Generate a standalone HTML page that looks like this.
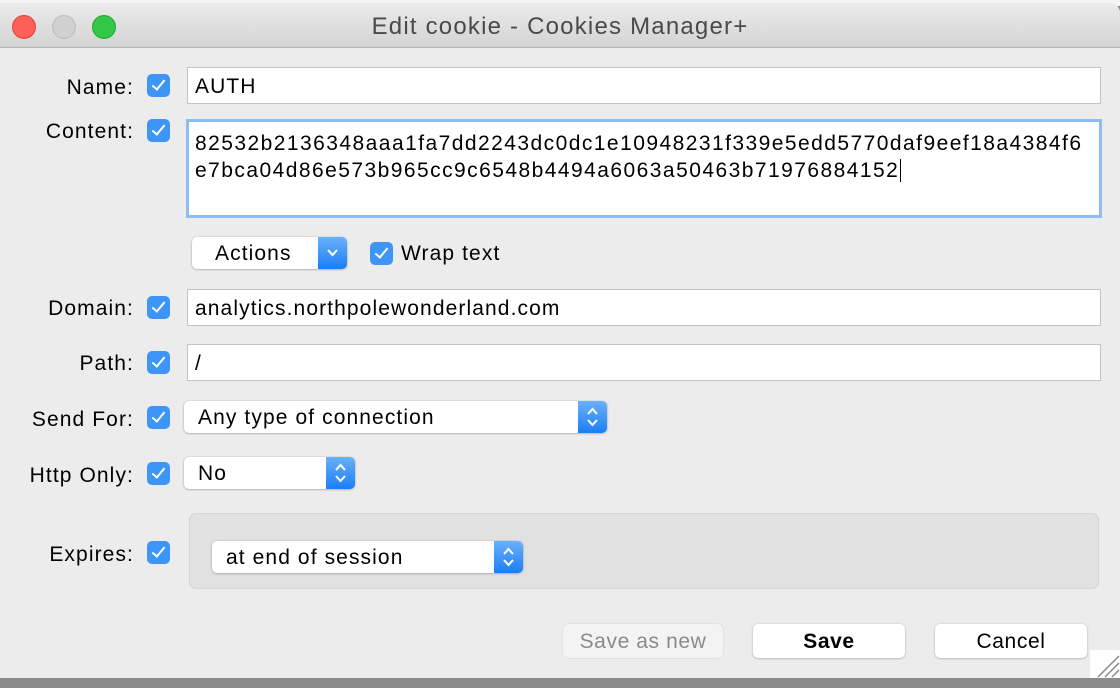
<!DOCTYPE html>
<html><head><meta charset="utf-8"><style>
*{box-sizing:border-box;margin:0;padding:0}
body{width:1120px;height:688px;overflow:hidden;background:#8a8a8a;font-family:"Liberation Sans",sans-serif;position:relative;letter-spacing:1.1px}
.top{position:absolute;left:0;top:0;width:1120px;height:6px;background:#f4f4f4}
.win{position:absolute;left:0;top:3px;width:1120px;height:675px;background:#ececec;border-radius:0 10px 0 0;overflow:hidden}
.tb{height:45px;background:linear-gradient(#ebebeb,#d4d4d4);border-bottom:1px solid #b4b4b4;text-align:center;font-size:24px;letter-spacing:1.2px;color:#4a4a4a;line-height:48px}
.light{position:absolute;top:12px;width:24px;height:24px;border-radius:50%}
.a{position:absolute}
.lbl{position:absolute;font-size:21px;color:#000;text-align:right;width:134px;left:0}
.cb{position:absolute;width:23px;height:23px;border-radius:5px;background:#3d95f8;}
.cb:after{content:"";position:absolute;left:8px;top:3px;width:5px;height:11px;border:solid #fff;border-width:0 2.5px 2.5px 0;transform:rotate(40deg)}
.inp{position:absolute;background:#fff;border:1px solid #c3c3c3;font-size:21px;padding-left:7px;color:#000}
.sel{position:absolute;background:#fff;border-radius:5px;box-shadow:0 0.5px 2px rgba(0,0,0,.35);font-size:21px;color:#000}
.arr{position:absolute;right:0;top:0;bottom:0;width:29px;background:linear-gradient(#6bb0fb,#1a7ef6);border-radius:0 5px 5px 0;color:#fff}
.btn{position:absolute;top:624px;height:34px;background:#fff;border-radius:5px;box-shadow:0 0.5px 2px rgba(0,0,0,.3);font-size:21px;letter-spacing:0.6px;text-align:center;line-height:35px}
</style></head><body>
<div class="top"></div>
<div class="win">
<div class="tb">Edit cookie - Cookies Manager+</div>
<div class="light" style="left:12px;background:#fc5f57;border:1px solid #e0443e"></div>
<div class="light" style="left:52px;background:#d0d0d0;border:1px solid #bcbcbc"></div>
<div class="light" style="left:92px;background:#33c748;border:1px solid #1dab31"></div>
</div>
<div class="lbl" style="top:76px">Name:</div><div class="cb" style="left:147px;top:74px"></div>
<div class="inp" style="left:187px;top:67px;width:914px;height:37px;line-height:38px">AUTH</div>
<div class="lbl" style="top:120px">Content:</div><div class="cb" style="left:147px;top:119px"></div>
<div class="inp" style="left:186px;top:119px;width:916px;height:99px;border:3px solid #8fbcf5;padding:8px 0 0 6px;line-height:27px;letter-spacing:1.45px;white-space:nowrap">82532b2136348aaa1fa7dd2243dc0dc1e10948231f339e5edd5770daf9eef18a4384f6<br>e7bca04d86e573b965cc9c6548b4494a6063a50463b71976884152<span style="border-left:1.5px solid #000;margin-left:1px"></span></div>
<div class="sel" style="left:192px;top:237px;width:155px;height:32px;line-height:34px;padding-left:23px">Actions<div class="arr"><svg width="29" height="32"><path d="M10 13l4.5 5 4.5-5" stroke="#fff" stroke-width="2" fill="none"/></svg></div></div>
<div class="cb" style="left:370px;top:242px"></div><div class="a" style="left:401px;top:242px;font-size:21px">Wrap text</div>
<div class="lbl" style="top:297px">Domain:</div><div class="cb" style="left:147px;top:296px"></div>
<div class="inp" style="left:187px;top:289px;width:914px;height:37px;line-height:38px">analytics.northpolewonderland.com</div>
<div class="lbl" style="top:352px">Path:</div><div class="cb" style="left:147px;top:351px"></div>
<div class="inp" style="left:187px;top:344px;width:914px;height:37px;line-height:38px">/</div>
<div class="lbl" style="top:408px">Send For:</div><div class="cb" style="left:147px;top:406px"></div>
<div class="sel" style="left:184px;top:401px;width:423px;height:32px;line-height:34px;padding-left:14px">Any type of connection<div class="arr"><svg width="29" height="32"><path d="M10 13l4.5-5 4.5 5M10 19l4.5 5 4.5-5" stroke="#fff" stroke-width="2" fill="none"/></svg></div></div>
<div class="lbl" style="top:464px">Http Only:</div><div class="cb" style="left:147px;top:462px"></div>
<div class="sel" style="left:184px;top:457px;width:171px;height:32px;line-height:34px;padding-left:14px">No<div class="arr"><svg width="29" height="32"><path d="M10 13l4.5-5 4.5 5M10 19l4.5 5 4.5-5" stroke="#fff" stroke-width="2" fill="none"/></svg></div></div>
<div class="a" style="left:189px;top:513px;width:910px;height:76px;background:#e1e1e1;border:1px solid #d6d6d6;border-radius:7px"></div>
<div class="lbl" style="top:543px">Expires:</div><div class="cb" style="left:147px;top:541px"></div>
<div class="sel" style="left:212px;top:541px;width:311px;height:32px;line-height:34px;padding-left:14px">at end of session<div class="arr"><svg width="29" height="32"><path d="M10 13l4.5-5 4.5 5M10 19l4.5 5 4.5-5" stroke="#fff" stroke-width="2" fill="none"/></svg></div></div>
<div class="btn" style="left:563px;width:160px;background:#f3f3f3;color:#8a8a8a;box-shadow:0 0 1px rgba(0,0,0,.25)">Save as new</div>
<div class="btn" style="left:753px;width:152px;font-weight:bold">Save</div>
<div class="btn" style="left:935px;width:152px">Cancel</div>
<div class="a" style="left:1090px;top:650px;width:30px;height:28px;background:#fff"><svg width="30" height="28"><path d="M8 27L29 6M15 27L29 13M22 27L29 20" stroke="#888" stroke-width="1.5"/></svg></div>
</body></html>
